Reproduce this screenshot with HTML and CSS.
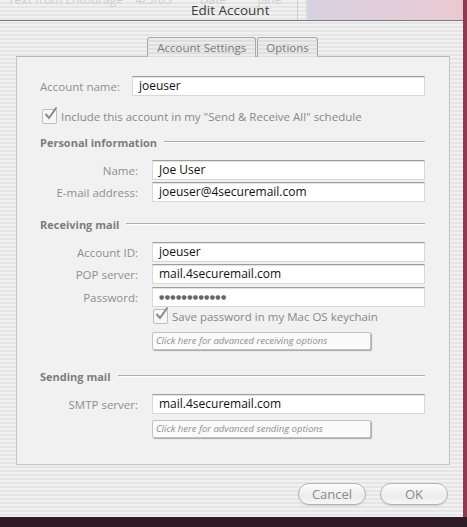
FILE: index.html
```html
<!DOCTYPE html>
<html lang="en">
<head>
    <meta charset="UTF-8">
    <title>Edit Account</title>
    <link rel="stylesheet" href="styles.css">
</head>
<body>
<div class="screen">
  <div class="window">
    <div class="titlebar">
      <div class="title-left">
        <div class="ghost">Text from Entourage &nbsp;&nbsp; 4/5/03 &nbsp;&nbsp;&nbsp;&nbsp;&nbsp;&nbsp;&nbsp; Date &nbsp;&nbsp;&nbsp;&nbsp;&nbsp;&nbsp;&nbsp;&nbsp; Jane</div>
        <span class="title">Edit Account</span>
      </div>
      <div class="sep"></div>
      <div class="desk"></div>
    </div>

    <div class="tabs">
      <div class="tab selected">Account Settings</div>
      <div class="tab">Options</div>
    </div>

    <div class="panel">
      <div class="row-first">
        <label class="lbl">Account name:</label>
        <div class="field">joeuser</div>
      </div>

      <div class="check first-check">
        <span class="box"><svg width="15" height="15" viewBox="0 0 15 15"><path d="M2.5 8 L6 12 L13.5 1.5" fill="none" stroke="#8a8a8a" stroke-width="2"/></svg></span>
        <span>Include this account in my "Send &amp; Receive All" schedule</span>
      </div>

      <div class="section s-personal"><span>Personal information</span><i></i></div>
      <div class="grid g-personal">
        <label class="lbl">Name:</label>
        <div class="field">Joe User</div>
        <label class="lbl">E-mail address:</label>
        <div class="field">joeuser@4securemail.com</div>
      </div>

      <div class="section s-receive"><span>Receiving mail</span><i></i></div>
      <div class="grid g-receive">
        <label class="lbl">Account ID:</label>
        <div class="field">joeuser</div>
        <label class="lbl">POP server:</label>
        <div class="field">mail.4securemail.com</div>
        <label class="lbl pw">Password:</label>
        <div class="field dots pw">●●●●●●●●●●●●</div>
        <span></span>
        <div class="check keychain">
          <span class="box"><svg width="15" height="15" viewBox="0 0 15 15"><path d="M2.5 8 L6 12 L13.5 1.5" fill="none" stroke="#8a8a8a" stroke-width="2"/></svg></span>
          <span>Save password in my Mac OS keychain</span>
        </div>
        <span></span>
        <div class="adv adv-receive">Click here for advanced receiving options</div>
      </div>

      <div class="section s-send"><span>Sending mail</span><i></i></div>
      <div class="grid g-send">
        <label class="lbl">SMTP server:</label>
        <div class="field">mail.4securemail.com</div>
        <span></span>
        <div class="adv adv-send">Click here for advanced sending options</div>
      </div>
    </div>

    <div class="actions">
      <button class="pill">Cancel</button>
      <button class="pill">OK</button>
    </div>
  </div>
</div>
</body>
</html>
```

FILE: styles.css
```css
body {
    margin: 0;
    font-family: "Open Sans", "DejaVu Sans", sans-serif;
    background: #2e1b26;
}
.screen {
    width: 467px;
    height: 527px;
    background: #2e1b26;
    overflow: hidden;
}
.window {
    width: 463px;
    height: 517px;
    border-right: 4px solid #8c3b4e;
    background: repeating-linear-gradient(to bottom, #f1f1f1 0 2px, #e5e5e5 2px 4px);
}

/* title bar */
.titlebar {
    display: flex;
    height: 20px;
    border-bottom: 1px solid #7b7b7b;
}
.title-left {
    position: relative;
    width: 297px;
    padding-left: 191px;
    box-sizing: border-box;
    overflow: hidden;
}
.ghost {
    position: absolute;
    left: 8px;
    top: -9px;
    font-size: 12px;
    color: #cfcfcf;
    white-space: nowrap;
}
.title {
    position: relative;
    display: block;
    font-size: 13.5px;
    line-height: 20px;
    color: #3a3a3a;
}
.sep {
    width: 11px;
    border-left: 1px solid #cfcfcf;
    border-right: 2px solid #dadada;
    box-sizing: border-box;
}
.desk {
    flex: 1;
    background: linear-gradient(to right, #d8cfe0, #e2cdd8 60%, #e9c9d1);
}

/* tabs */
.tabs {
    display: flex;
    justify-content: center;
    gap: 1px;
    margin-top: 16px;
    margin-left: 2px;
    height: 20px;
    position: relative;
    z-index: 1;
}
.tab {
    height: 19px;
    padding: 0 8px;
    border: 1px solid #a9a9a9;
    border-bottom: none;
    border-radius: 3px 3px 0 0;
    background: repeating-linear-gradient(to bottom, #ececec 0 2px, #dedede 2px 4px);
    font-size: 11.5px;
    line-height: 19px;
    color: #7a7a7a;
}
.tab.selected {
    padding: 0 9px;
}

/* panel */
.panel {
    margin: -1px 13px 0 16px;
    height: 409px;
    box-sizing: border-box;
    border: 1px solid #c6c6c6;
    border-top-color: #b7b7b7;
    background: #f1f1f1;
    padding: 19px 24px 0 23px;
}
.lbl {
    font-size: 11.5px;
    color: #8f8f8f;
    white-space: nowrap;
}
.field {
    height: 20px;
    box-sizing: border-box;
    background: #fff;
    border: 1px solid #d8d8d8;
    border-top-color: #9d9d9d;
    box-shadow: inset 0 1px 0 #e4e4e4;
    padding-left: 6px;
    font-size: 12px;
    line-height: 18px;
    color: #111;
}
.row-first {
    display: flex;
    align-items: center;
    gap: 12px;
}
.row-first .field {
    flex: 1;
}
.check {
    display: flex;
    align-items: center;
    gap: 4px;
    height: 16px;
    font-size: 11.5px;
    color: #888;
}
.box {
    width: 13px;
    height: 13px;
    border: 1px solid #bdbdbd;
    border-radius: 2px;
    background: #f7f7f7;
    position: relative;
}
.box svg {
    position: absolute;
    left: 0;
    top: -4px;
}
.first-check {
    margin-top: 12px;
    margin-left: 2px;
}

/* section headings */
.section {
    display: flex;
    align-items: center;
    height: 14px;
    font-size: 11px;
    font-weight: bold;
    color: #7d7d7d;
}
.section i {
    flex: 1;
    margin-left: 7px;
    border-top: 1px solid #aeaeae;
    border-bottom: 1px solid #fff;
}
.s-personal { margin-top: 11px; }
.s-receive { margin-top: 15px; }
.s-send { margin-top: 19px; }

.grid {
    display: grid;
    grid-template-columns: 100px 1fr;
    column-gap: 12px;
    row-gap: 2px;
    align-items: center;
}
.grid .lbl {
    text-align: right;
    padding-right: 2px;
}
.g-personal { margin-top: 11px; }
.g-receive { margin-top: 11px; }
.g-send { margin-top: 11px; }
.pw { margin-top: 1px; }
.dots {
    font-size: 6px;
    letter-spacing: 0.4px;
    color: #666;
}
.keychain {
    margin-top: -1px;
    margin-left: 1px;
}
.adv {
    width: 219px;
    height: 18px;
    box-sizing: border-box;
    border: 1px solid #c2c2c2;
    border-radius: 2px;
    background: #fafafa;
    box-shadow: 1px 1px 1px #a8a8a8;
    padding-left: 3px;
    font-size: 9.5px;
    font-style: italic;
    line-height: 16px;
    color: #8e8e8e;
}
.adv-receive { margin-top: 6px; }
.adv-send { margin-top: 4px; }

/* bottom buttons */
.actions {
    display: flex;
    justify-content: flex-end;
    gap: 14px;
    padding: 18px 15px 0 0;
}
.pill {
    width: 68px;
    height: 22px;
    border: 1px solid #b4b4b4;
    border-radius: 11px;
    background: linear-gradient(to bottom, #fdfdfd, #ececec 60%, #f6f6f6);
    box-shadow: 0 1px 1px #cfcfcf;
    font-family: "Open Sans", "DejaVu Sans", sans-serif;
    font-size: 13px;
    color: #8a8a8a;
    padding: 0;
}
```
